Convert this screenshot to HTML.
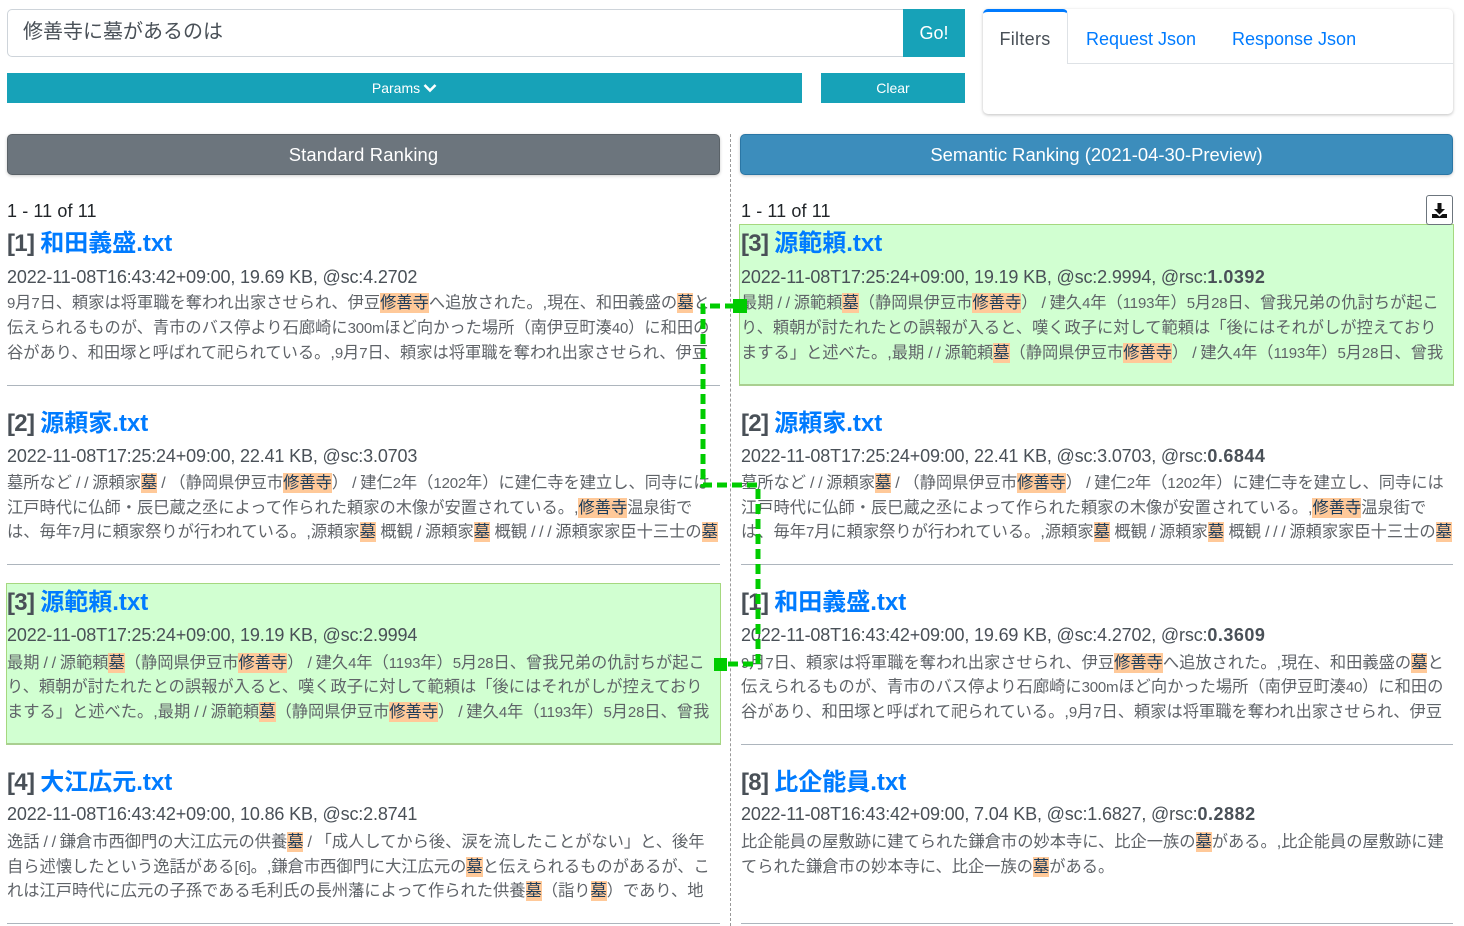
<!DOCTYPE html>
<html lang="ja"><head><meta charset="utf-8"><title>Search</title>
<style>
*{box-sizing:border-box}
html,body{margin:0;padding:0;background:#fff;width:1464px;height:926px;overflow:hidden}
body{position:relative;font-family:"Liberation Sans","Noto Sans CJK JP",sans-serif;color:#212529}
.a{position:absolute}
.btn{position:absolute;background:#17a2b8;color:#fff;display:flex;align-items:center;justify-content:center}
.t,.m,.l{position:absolute;white-space:nowrap}
.t{font-size:24px;line-height:30px;height:30px;font-weight:700;color:#495057;margin-top:1px}
.t i{font-style:normal;letter-spacing:-.7px}
.t a{color:#007bff;text-decoration:none}
.m{font-size:18px;line-height:24px;height:24px;color:#495057;letter-spacing:-.16px}
.m b{color:#495057;letter-spacing:.5px}
.l{font-size:16.25px;line-height:24px;height:24px;color:#5f6368;margin-top:1px}
mark{background:#ffc999;color:#1d3c5a;display:inline-block;height:20px;line-height:20px}
.n{font-size:15px;letter-spacing:-.2px}
.s{font-size:16px;letter-spacing:-.4px}
.hr{position:absolute;height:1px;background:#adb5bd}
.g{position:absolute;background:#d1ffd1;border:1px solid #a5d87f;border-bottom:2px solid #a9cf90}
</style></head><body>

<div class="a" style="left:7px;top:9px;width:897px;height:48px;border:1px solid #ced4da;border-radius:5px 0 0 5px;font-size:20px;line-height:44px;padding-left:15px;color:#495057">修善寺に墓があるのは</div>
<div class="btn" style="left:903px;top:9px;width:62px;height:48px;font-size:18px;padding-top:1px">Go!</div>
<div class="btn" style="left:7px;top:73px;width:795px;height:30px;font-size:14px">Params<svg width="14" height="10" viewBox="0 0 14 10" style="margin-left:3px"><path d="M1.500 2 L7 7.500 L12.500 2" fill="none" stroke="#fff" stroke-width="2.600"/></svg></div>
<div class="btn" style="left:821px;top:73px;width:144px;height:30px;font-size:14px">Clear</div>

<div class="a" style="left:983px;top:9px;width:470px;height:105px;border-radius:5px;box-shadow:0 1px 3px rgba(0,0,0,.25)"></div>
<div class="a" style="left:983px;top:63px;width:470px;height:1px;background:#dee2e6"></div>
<div class="a" style="left:983px;top:9px;width:85px;height:55px;background:#fff;border-top:3px solid #007bff;border-right:1px solid #dee2e6;border-radius:5px 5px 0 0;font-size:18px;line-height:55px;text-align:center;color:#495057;letter-spacing:.3px">Filters</div>
<div class="a" style="left:1086px;top:27px;font-size:18px;line-height:24px;color:#007bff;white-space:nowrap">Request Json</div>
<div class="a" style="left:1232px;top:27px;font-size:18px;line-height:24px;color:#007bff;white-space:nowrap">Response Json</div>

<div class="btn" style="left:7px;top:134px;width:713px;height:41px;background:#6c757d;border:1px solid #5a6268;border-radius:5px;font-size:18.400px;letter-spacing:.15px;padding-top:1px;box-shadow:0 1px 3px rgba(0,0,0,.2)">Standard Ranking</div>
<div class="btn" style="left:740px;top:134px;width:713px;height:41px;background:#3c8dbc;border:1px solid #2a76a5;border-radius:5px;font-size:18.400px;padding-top:1px;box-shadow:0 1px 3px rgba(0,0,0,.2)">Semantic Ranking (2021-04-30-Preview)</div>

<div class="a" style="left:730px;top:134px;height:792px;border-left:1px dashed #999"></div>

<div class="g" style="left:739px;top:224px;width:715px;height:162px"></div>
<div class="g" style="left:6px;top:583px;width:715px;height:162px"></div>

<div class="m" style="left:7px;top:199px;color:#212529;letter-spacing:.1px">1 - 11 of 11</div>
<div class="m" style="left:741px;top:199px;color:#212529;letter-spacing:.1px">1 - 11 of 11</div>

<div class="a" style="left:1426px;top:195px;width:27px;height:30px;border:1px solid #6c757d;border-radius:3px;background:#fff"><svg width="25" height="28" viewBox="0 0 25 28" style="display:block"><path d="M10.500 7h4v6h3.500l-5.500 5.500L7 13h3.500z" fill="#111"/><path d="M5 18h4.500l3 2.500 3-2.500H20v4H5z" fill="#111"/></svg></div>

<!-- LEFT -->
<div class="t" style="left:7px;top:228px"><i>[1] </i><a>和田義盛.txt</a></div>
<div class="m" style="left:7px;top:265px">2022-11-08T16:43:42+09:00, 19.69 KB, @sc:4.2702</div>
<div class="l" style="left:7px;top:290px"><span class="n">9</span>月<span class="n">7</span>日、頼家は将軍職を奪われ出家させられ、伊豆<mark>修善寺</mark>へ追放された。,現在、和田義盛の<mark>墓</mark>と</div>
<div class="l" style="left:7px;top:315px">伝えられるものが、青市のバス停より石廊崎に<span class="n">300m</span>ほど向かった場所（南伊豆町湊<span class="n">40</span>）に和田の</div>
<div class="l" style="left:7px;top:340px">谷があり、和田塚と呼ばれて祀られている。,<span class="n">9</span>月<span class="n">7</span>日、頼家は将軍職を奪われ出家させられ、伊豆</div>
<div class="hr" style="left:7px;top:385px;width:713px"></div>

<div class="t" style="left:7px;top:408px"><i>[2] </i><a>源頼家.txt</a></div>
<div class="m" style="left:7px;top:444px">2022-11-08T17:25:24+09:00, 22.41 KB, @sc:3.0703</div>
<div class="l" style="left:7px;top:470px">墓所など<span class="s"> / / </span>源頼家<mark>墓</mark><span class="s"> / </span>（静岡県伊豆市<mark>修善寺</mark>）<span class="s"> / </span>建仁<span class="n">2</span>年（<span class="n">1202</span>年）に建仁寺を建立し、同寺には</div>
<div class="l" style="left:7px;top:495px">江戸時代に仏師・辰巳蔵之丞によって作られた頼家の木像が安置されている。,<mark>修善寺</mark>温泉街で</div>
<div class="l" style="left:7px;top:519px">は、毎年<span class="n">7</span>月に頼家祭りが行われている。,源頼家<mark>墓</mark> 概観<span class="s"> / </span>源頼家<mark>墓</mark> 概観<span class="s"> / / / </span>源頼家家臣十三士の<mark>墓</mark></div>
<div class="hr" style="left:7px;top:564px;width:713px"></div>

<div class="t" style="left:7px;top:587px"><i>[3] </i><a>源範頼.txt</a></div>
<div class="m" style="left:7px;top:623px">2022-11-08T17:25:24+09:00, 19.19 KB, @sc:2.9994</div>
<div class="l" style="left:7px;top:650px">最期<span class="s"> / / </span>源範頼<mark>墓</mark>（静岡県伊豆市<mark>修善寺</mark>）<span class="s"> / </span>建久<span class="n">4</span>年（<span class="n">1193</span>年）<span class="n">5</span>月<span class="n">28</span>日、曾我兄弟の仇討ちが起こ</div>
<div class="l" style="left:7px;top:674px">り、頼朝が討たれたとの誤報が入ると、嘆く政子に対して範頼は「後にはそれがしが控えており</div>
<div class="l" style="left:7px;top:699px">まする」と述べた。,最期<span class="s"> / / </span>源範頼<mark>墓</mark>（静岡県伊豆市<mark>修善寺</mark>）<span class="s"> / </span>建久<span class="n">4</span>年（<span class="n">1193</span>年）<span class="n">5</span>月<span class="n">28</span>日、曾我</div>

<div class="t" style="left:7px;top:767px"><i>[4] </i><a>大江広元.txt</a></div>
<div class="m" style="left:7px;top:802px">2022-11-08T16:43:42+09:00, 10.86 KB, @sc:2.8741</div>
<div class="l" style="left:7px;top:829px">逸話<span class="s"> / / </span>鎌倉市西御門の大江広元の供養<mark>墓</mark><span class="s"> / </span>「成人してから後、涙を流したことがない」と、後年</div>
<div class="l" style="left:7px;top:854px">自ら述懐したという逸話がある<span class="n">[6]</span>。,鎌倉市西御門に大江広元の<mark>墓</mark>と伝えられるものがあるが、こ</div>
<div class="l" style="left:7px;top:878px">れは江戸時代に広元の子孫である毛利氏の長州藩によって作られた供養<mark>墓</mark>（詣り<mark>墓</mark>）であり、地</div>
<div class="hr" style="left:7px;top:923px;width:713px"></div>

<!-- RIGHT -->
<div class="t" style="left:741px;top:228px"><i>[3] </i><a>源範頼.txt</a></div>
<div class="m" style="left:741px;top:265px">2022-11-08T17:25:24+09:00, 19.19 KB, @sc:2.9994, @rsc:<b>1.0392</b></div>
<div class="l" style="left:741px;top:290px">最期<span class="s"> / / </span>源範頼<mark>墓</mark>（静岡県伊豆市<mark>修善寺</mark>）<span class="s"> / </span>建久<span class="n">4</span>年（<span class="n">1193</span>年）<span class="n">5</span>月<span class="n">28</span>日、曾我兄弟の仇討ちが起こ</div>
<div class="l" style="left:741px;top:315px">り、頼朝が討たれたとの誤報が入ると、嘆く政子に対して範頼は「後にはそれがしが控えており</div>
<div class="l" style="left:741px;top:340px">まする」と述べた。,最期<span class="s"> / / </span>源範頼<mark>墓</mark>（静岡県伊豆市<mark>修善寺</mark>）<span class="s"> / </span>建久<span class="n">4</span>年（<span class="n">1193</span>年）<span class="n">5</span>月<span class="n">28</span>日、曾我</div>

<div class="t" style="left:741px;top:408px"><i>[2] </i><a>源頼家.txt</a></div>
<div class="m" style="left:741px;top:444px">2022-11-08T17:25:24+09:00, 22.41 KB, @sc:3.0703, @rsc:<b>0.6844</b></div>
<div class="l" style="left:741px;top:470px">墓所など<span class="s"> / / </span>源頼家<mark>墓</mark><span class="s"> / </span>（静岡県伊豆市<mark>修善寺</mark>）<span class="s"> / </span>建仁<span class="n">2</span>年（<span class="n">1202</span>年）に建仁寺を建立し、同寺には</div>
<div class="l" style="left:741px;top:495px">江戸時代に仏師・辰巳蔵之丞によって作られた頼家の木像が安置されている。,<mark>修善寺</mark>温泉街で</div>
<div class="l" style="left:741px;top:519px">は、毎年<span class="n">7</span>月に頼家祭りが行われている。,源頼家<mark>墓</mark> 概観<span class="s"> / </span>源頼家<mark>墓</mark> 概観<span class="s"> / / / </span>源頼家家臣十三士の<mark>墓</mark></div>
<div class="hr" style="left:741px;top:564px;width:712px"></div>

<div class="t" style="left:741px;top:587px"><i>[1] </i><a>和田義盛.txt</a></div>
<div class="m" style="left:741px;top:623px">2022-11-08T16:43:42+09:00, 19.69 KB, @sc:4.2702, @rsc:<b>0.3609</b></div>
<div class="l" style="left:741px;top:650px"><span class="n">9</span>月<span class="n">7</span>日、頼家は将軍職を奪われ出家させられ、伊豆<mark>修善寺</mark>へ追放された。,現在、和田義盛の<mark>墓</mark>と</div>
<div class="l" style="left:741px;top:674px">伝えられるものが、青市のバス停より石廊崎に<span class="n">300m</span>ほど向かった場所（南伊豆町湊<span class="n">40</span>）に和田の</div>
<div class="l" style="left:741px;top:699px">谷があり、和田塚と呼ばれて祀られている。,<span class="n">9</span>月<span class="n">7</span>日、頼家は将軍職を奪われ出家させられ、伊豆</div>
<div class="hr" style="left:741px;top:744px;width:712px"></div>

<div class="t" style="left:741px;top:767px"><i>[8] </i><a>比企能員.txt</a></div>
<div class="m" style="left:741px;top:802px">2022-11-08T16:43:42+09:00, 7.04 KB, @sc:1.6827, @rsc:<b>0.2882</b></div>
<div class="l" style="left:741px;top:829px">比企能員の屋敷跡に建てられた鎌倉市の妙本寺に、比企一族の<mark>墓</mark>がある。,比企能員の屋敷跡に建</div>
<div class="l" style="left:741px;top:854px">てられた鎌倉市の妙本寺に、比企一族の<mark>墓</mark>がある。</div>
<div class="hr" style="left:741px;top:923px;width:712px"></div>

<svg class="a" style="left:0;top:0" width="1464" height="926" viewBox="0 0 1464 926">
<path d="M735 306H703V485H758V664H722" fill="none" stroke="#00cc00" stroke-width="5" stroke-dasharray="10 5"/>
<rect x="733" y="299" width="14" height="14" fill="#00cc00"/>
<rect x="714" y="658" width="13" height="13" fill="#00cc00"/>
</svg>
</body></html>
